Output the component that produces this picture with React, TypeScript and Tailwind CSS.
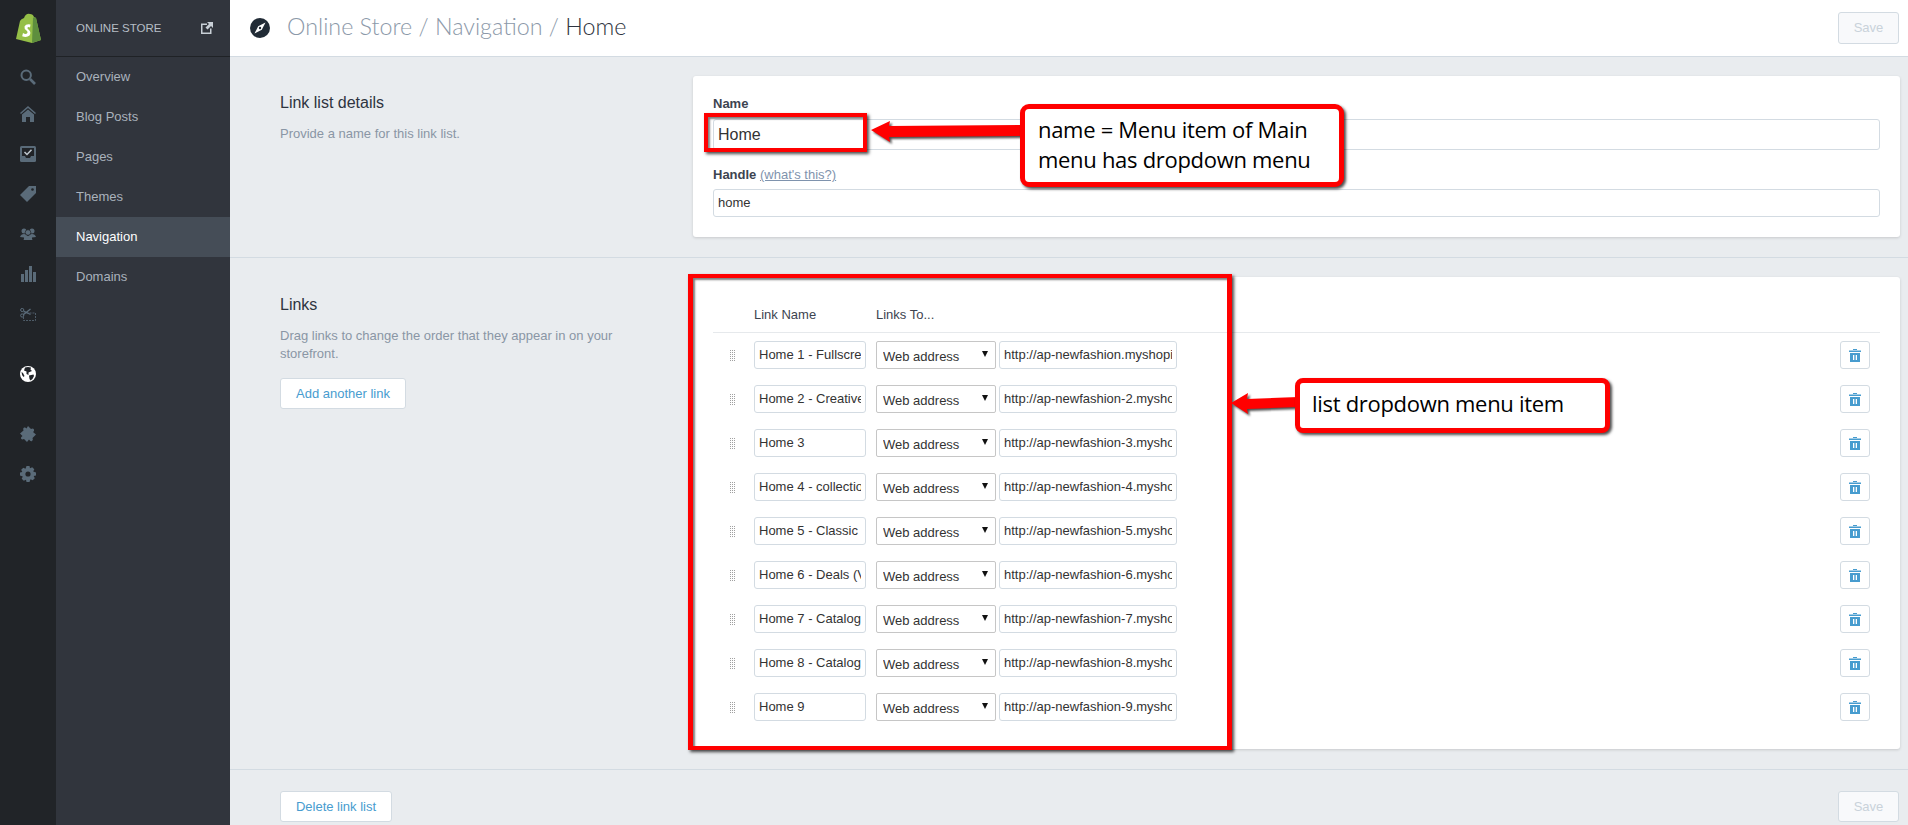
import React from 'react';

const ICON = '#5a6b79';

const links = [
    { name: 'Home 1 - Fullscreen', url: 'http://ap-newfashion.myshopify.com' },
    { name: 'Home 2 - Creative', url: 'http://ap-newfashion-2.myshopify.com' },
    { name: 'Home 3', url: 'http://ap-newfashion-3.myshopify.com' },
    { name: 'Home 4 - collection', url: 'http://ap-newfashion-4.myshopify.com' },
    { name: 'Home 5 - Classic', url: 'http://ap-newfashion-5.myshopify.com' },
    { name: 'Home 6 - Deals (V', url: 'http://ap-newfashion-6.myshopify.com' },
    { name: 'Home 7 - Catalog', url: 'http://ap-newfashion-7.myshopify.com' },
    { name: 'Home 8 - Catalog', url: 'http://ap-newfashion-8.myshopify.com' },
    { name: 'Home 9', url: 'http://ap-newfashion-9.myshopify.com' },
];

const navItems = ['Overview', 'Blog Posts', 'Pages', 'Themes', 'Navigation', 'Domains'];

const Logo = () => (
    <svg width="27" height="31" viewBox="0 0 27 31">
        <path d="M1 26 L5 8 Q6 6 9 5 Q11 0 15 1 Q18 1 19 4 L21 5 L26 27 L17 30 Z" fill="#95bf47" />
        <path d="M19 4 L21 5 L26 27 L17 30 L18 5 Z" fill="#5e8e3e" />
        <path d="M15.5 11.5 Q11 10.5 9.5 13.5 Q9 16 11.5 17.5 Q13.5 19 12 20.5 Q10.5 21.5 8 20 L7.2 23.2 Q11.5 25 14.5 22.5 Q16.5 19.5 14 17 Q12 15.500 12.500 14.500 Q13.500 13.500 15 14.500 Z" fill="#fff" />
    </svg>
);

const SearchIcon = () => (
    <svg width="16" height="16" viewBox="0 0 16 16" fill="none" stroke={ICON}>
        <circle cx="6.200" cy="6.200" r="4.700" strokeWidth="2" />
        <path d="M10 10 L15 15" strokeWidth="2.600" />
    </svg>
);

const HomeIcon = () => (
    <svg width="16" height="16" viewBox="0 0 16 16" fill={ICON}>
        <path d="M8 0 L16 7 L15 8 L8 2 L1 8 L0 7 Z" />
        <path d="M8 3.500 L14 8.500 V16 H10 V11 H6 V16 H2 V8.500 Z" />
    </svg>
);

const CheckIcon = () => (
    <svg width="16" height="16" viewBox="0 0 16 16">
        <rect width="16" height="16" rx="1.500" fill={ICON} />
        <path d="M2 2 H14 V10 H11 L10 12 H6 L5 10 H2 Z" fill="#212428" />
        <path d="M4.500 6 L7 8.500 L11.500 3.800" stroke="#c0c8cf" strokeWidth="1.500" fill="none" />
    </svg>
);

const TagIcon = () => (
    <svg width="16" height="16" viewBox="0 0 16 16">
        <path d="M9 0 H16 V7 L7 16 L0 9 Z" fill={ICON} />
        <circle cx="12.500" cy="3.500" r="1.300" fill="#212428" />
    </svg>
);

const PeopleIcon = () => (
    <svg width="16" height="12" viewBox="0 0 16 12" fill={ICON}>
        <circle cx="4" cy="3" r="2.500" />
        <circle cx="12" cy="3" r="2.500" />
        <path d="M0 9 Q1 6 4 6 Q7 6 8 9 Q9 6 12 6 Q15 6 16 9 L12 9.500 V11 H4 V9.500 Z" />
        <circle cx="8" cy="4.500" r="2.800" stroke="#212428" strokeWidth="0.700" />
        <path d="M3.500 12 Q4.500 8 8 8 Q11.500 8 12.500 12 Z" />
    </svg>
);

const ChartIcon = () => (
    <svg width="15" height="16" viewBox="0 0 15 16" fill={ICON}>
        <rect y="8" width="3" height="8" />
        <rect x="4" y="4" width="3" height="12" />
        <rect x="8" y="0" width="3" height="16" />
        <rect x="12" y="6" width="3" height="10" />
    </svg>
);

const ScissorsIcon = () => (
    <svg width="16" height="13" viewBox="0 0 16 13" fill="none" stroke={ICON}>
        <circle cx="2.200" cy="2" r="1.600" />
        <circle cx="2.200" cy="7.500" r="1.600" />
        <path d="M3.600 3 L10.500 6.500 M3.600 6.500 L10.500 1" strokeWidth="1.300" />
        <rect x="3.500" y="5" width="12" height="7.500" strokeWidth="0.800" strokeDasharray="2 1" />
    </svg>
);

const GlobeIcon = () => (
    <svg width="16" height="16" viewBox="0 0 16 16">
        <circle cx="8" cy="8" r="8" fill="#fff" />
        <path d="M5 1.500 Q8 0.500 11 1.500 L10.500 3.500 L12 5 L8.500 6.500 L8.500 9 L6.500 8 L6.500 5.500 L4 4.500 Z" fill="#212428" />
        <path d="M9 9.500 L13.500 8.500 L14 10 Q13 13 10.500 14.500 L9.500 13 Z" fill="#212428" />
        <path d="M1.500 6 L3 7 L4.500 10 L3.500 11 Q1.500 9 1.500 6 Z" fill="#212428" />
    </svg>
);

const PuzzleIcon = () => (
    <svg width="16" height="16" viewBox="0 0 16 16" fill={ICON}>
        <path d="M8 0 L11 3 Q13 2 14 3.500 Q14.500 5 13 6 L16 8.500 L12.500 12 Q13.500 14 12 15 Q10.500 16 9 13.500 L7 16 L4 13 Q2 14 1 12.500 Q0.500 11 2.500 10 L0 7.500 L3.500 4.500 Q2.500 2.500 4 1.500 Q5.500 1 6.500 2.500 Z" />
    </svg>
);

const GearIcon = () => (
    <svg width="16" height="16" viewBox="0 0 16 16">
        <path d="M6.500 0 H9.500 L10 2.300 L12.200 1.200 L14.300 3.300 L13.200 5.500 L16 6.500 V9.500 L13.700 10 L14.800 12.200 L12.700 14.300 L10.500 13.200 L9.500 16 H6.500 L6 13.700 L3.800 14.800 L1.700 12.700 L2.800 10.500 L0 9.500 V6.500 L2.300 6 L1.200 3.800 L3.300 1.700 L5.500 2.800 Z" fill={ICON} />
        <circle cx="8" cy="8" r="2.600" fill="#212428" />
    </svg>
);

const ExternalIcon = () => (
    <svg width="12" height="12" viewBox="0 0 12 12">
        <path d="M0 1.500 H6 V3 H1.500 V10.500 H9 V6.500 H10.500 V12 H0 Z" fill="#c8cfd6" />
        <path d="M6 0 H12 V6 L10 4 L6.500 7.500 L4.500 5.500 L8 2 Z" fill="#c8cfd6" />
    </svg>
);

const CompassIcon = () => (
    <svg width="20" height="20" viewBox="0 0 20 20">
        <circle cx="10" cy="10" r="10" fill="#212b36" />
        <path d="M15.500 4.500 L11.800 11.800 L4.500 15.500 L8.200 8.200 Z" fill="#fff" />
        <circle cx="10" cy="10" r="1.200" fill="#212b36" />
    </svg>
);

const TrashIcon = () => (
    <svg width="12" height="13" viewBox="0 0 12 13" fill="#479ccf">
        <rect x="4" y="0" width="4" height="1" />
        <rect x="0" y="1.500" width="12" height="1.500" />
        <path d="M1 4 H11 V13 H1 Z M4 6 V11 H5.300 V6 Z M6.700 6 V11 H8 V6 Z" fillRule="evenodd" />
    </svg>
);

const DragHandle = () => (
    <div className="grid grid-cols-3 gap-px w-[5px]">
        {Array.from({ length: 18 }).map((_, i) => (
            <span key={i} className="w-[1px] h-[1px] bg-[#a0a0a0]" />
        ))}
    </div>
);

const railIcons = [
    { icon: <SearchIcon />, cls: 'h-[34px]' },
    { icon: <HomeIcon />, cls: 'h-10' },
    { icon: <CheckIcon />, cls: 'h-10' },
    { icon: <TagIcon />, cls: 'h-10' },
    { icon: <PeopleIcon />, cls: 'h-10' },
    { icon: <ChartIcon />, cls: 'h-10' },
    { icon: <ScissorsIcon />, cls: 'h-10 mb-5' },
    { icon: <GlobeIcon />, cls: 'h-10 mb-5' },
    { icon: <PuzzleIcon />, cls: 'h-10' },
    { icon: <GearIcon />, cls: 'h-10' },
];

const LinkRow = ({ name, url }: { name: string; url: string }) => (
    <div className="flex items-center h-7 mb-4">
        <div className="w-[41px] pl-[17px] flex">
            <DragHandle />
        </div>
        <input readOnly value={name} className="w-[112px] h-7 px-1 pb-[2px] border border-[#d3dbe2] rounded-[3px] bg-white text-[13px] text-[#333] outline-none" />
        <div className="relative w-[120px] h-7 ml-[10px]">
            <select className="appearance-none w-full h-7 pl-[6px] pt-[3px] border border-[#c6c6c6] rounded-[2px] bg-white text-[13px] text-[#333] outline-none">
                <option>Web address</option>
            </select>
            <span className="absolute right-[8px] top-[10px] w-0 h-0 border-x-[3px] border-x-transparent border-t-[6px] border-t-[#111]" />
        </div>
        <input readOnly value={url} className="w-[178px] h-7 ml-[3px] px-1 pb-[2px] border border-[#d3dbe2] rounded-[3px] bg-white text-[13px] text-[#333] outline-none" />
        <button className="ml-auto w-[30px] h-7 flex items-center justify-center border border-[#d3dbe2] rounded-[3px] bg-white">
            <TrashIcon />
        </button>
    </div>
);

const Annotations = () => (
    <>
        {/* Red box round the name field */}
        <div className="absolute left-[704px] top-[113px] w-[163px] h-[39px] border-4 border-[#ff0000] shadow-[2px_2px_3px_rgba(0,0,0,0.7),inset_2px_2px_2px_rgba(0,0,0,0.5)]" />
        <svg className="absolute left-[868px] top-[118px] drop-shadow-[2px_2px_1px_rgba(0,0,0,0.7)]" width="156" height="28" viewBox="0 0 156 28">
            <path d="M3 12 L22 3 L21 8 L156 7 V18 L21 19 L22 24 Z" fill="#ff0000" />
        </svg>
        <div className="absolute left-[1020px] top-[104px] w-[324px] h-[83px] pl-[13px] flex items-center border-[5px] border-[#ff0000] rounded-[9px] bg-white shadow-[2px_2px_3px_rgba(0,0,0,0.7)] font-['Open_Sans',sans-serif] text-[22px] leading-[30px] tracking-[-0.3px] text-black">
            <p className="mt-[-3px]">name = Menu item of Main<br />menu has dropdown menu</p>
        </div>

        {/* Red box round the links table */}
        <div className="absolute left-[688px] top-[274px] w-[544px] h-[476px] border-x-[5px] border-y-4 border-[#ff0000] shadow-[2px_2px_3px_rgba(0,0,0,0.7),inset_2px_2px_2px_rgba(0,0,0,0.5)]" />
        <svg className="absolute left-[1229px] top-[390px] drop-shadow-[2px_2px_1px_rgba(0,0,0,0.7)]" width="70" height="28" viewBox="0 0 70 28">
            <path d="M2 13 L19 3 L18 9 L70 7 V17 L18 19 L19 24 Z" fill="#ff0000" />
        </svg>
        <div className="absolute left-[1295px] top-[378px] w-[315px] h-[55px] pl-[12px] flex items-center border-[5px] border-[#ff0000] rounded-[8px] bg-white shadow-[2px_2px_3px_rgba(0,0,0,0.7)] font-['Open_Sans',sans-serif] text-[22px] tracking-[-0.3px] text-black">
            <p className="mt-[-5px]">list dropdown menu item</p>
        </div>
    </>
);

export default function App() {
    return (
        <div className="relative flex h-[825px] w-[1908px] overflow-hidden bg-[#e9ecef] font-['Liberation_Sans',sans-serif]">
            {/* Icon rail */}
            <div className="w-14 shrink-0 bg-[#212428] flex flex-col items-center">
                <div className="h-[60px] w-full flex items-start justify-center pt-[13px]">
                    <Logo />
                </div>
                {railIcons.map((item, i) => (
                    <div key={i} className={`${item.cls} flex items-center justify-center`}>
                        {item.icon}
                    </div>
                ))}
            </div>

            {/* Section nav */}
            <div className="w-[174px] shrink-0 bg-[#31353d]">
                <div className="h-[57px] pl-5 pr-[17px] flex items-center justify-between border-b border-[#1f2226]">
                    <span className="mt-px text-[11.5px] text-[#b6bec6] uppercase">Online Store</span>
                    <ExternalIcon />
                </div>
                {navItems.map(item => (
                    <div
                        key={item}
                        className={item === 'Navigation'
                            ? 'h-10 pl-5 flex items-center bg-[#454d57] text-[13px] text-white'
                            : 'h-10 pl-5 flex items-center text-[13px] text-[#a9b2bc]'}
                    >
                        {item}
                    </div>
                ))}
            </div>

            {/* Main */}
            <div className="flex-1 min-w-0">
                <div className="h-[57px] bg-white border-b border-[#d3dbe2] flex items-center pl-5 pr-[9px]">
                    <CompassIcon />
                    <h1 className="ml-[17px] mb-[3px] font-['Lato',sans-serif] font-light text-[23.3px] text-[#8c99a9]">
                        Online Store / Navigation / <span className="text-[#2e3440]">Home</span>
                    </h1>
                    <button className="ml-auto w-[61px] h-8 border border-[#d3dbe2] rounded-[3px] bg-[#f8f9fb] text-[13px] text-[#c9d2da]">Save</button>
                </div>

                <div className="flex pl-[50px] pr-2 pt-[19px] pb-5 border-b border-[#d3dbe2]">
                    <div className="w-[413px] shrink-0 pt-[17px]">
                        <h2 className="text-base leading-5 text-[#2e3440]">Link list details</h2>
                        <p className="mt-3 text-[13px] leading-[18px] text-[#8a96a5]">Provide a name for this link list.</p>
                    </div>
                    <div className="flex-1 h-[161px] pl-5 pr-5 pt-5 bg-white rounded-[3px] shadow-[0_1px_3px_rgba(0,0,0,0.15)]">
                        <label className="block h-4 text-[13px] leading-4 font-bold text-[#3d4450]">Name</label>
                        <input readOnly value="Home" className="block w-full h-[31px] mt-[7px] px-1 border border-[#d3dbe2] rounded-[3px] text-base text-[#333] outline-none" />
                        <label className="block h-4 mt-[17px] text-[13px] leading-4 font-bold text-[#3d4450]">
                            Handle <span className="font-normal text-[#7f93ad] underline">(what's this?)</span>
                        </label>
                        <input readOnly value="home" className="block w-full h-7 mt-[6px] px-1 pb-[2px] border border-[#d3dbe2] rounded-[3px] text-[13px] text-[#333] outline-none" />
                    </div>
                </div>

                <div className="flex pl-[50px] pr-2 pt-[19px] pb-5 border-b border-[#d3dbe2]">
                    <div className="w-[413px] shrink-0 pt-[18px]">
                        <h2 className="text-base leading-5 text-[#2e3440]">Links</h2>
                        <p className="w-[360px] mt-3 text-[13px] leading-[18px] text-[#8a96a5]">Drag links to change the order that they appear in on your storefront.</p>
                        <button className="block w-[126px] h-[31px] mt-[15px] border border-[#d3dbe2] rounded-[3px] bg-white text-[13px] text-[#479ccf]">Add another link</button>
                    </div>
                    <div className="flex-1 h-[472px] pl-5 pr-[30px] bg-white rounded-[3px] shadow-[0_1px_3px_rgba(0,0,0,0.15)]">
                        <div className="h-[56px] pl-[41px] pt-[29px] mr-[-10px] flex items-start border-b border-[#e6e9ec] text-[13px] leading-[18px] text-[#3d4450]">
                            <span className="w-[122px]">Link Name</span>
                            <span>Links To...</span>
                        </div>
                        <div className="pt-2">
                            {links.map(link => (
                                <LinkRow key={link.name + link.url} name={link.name} url={link.url} />
                            ))}
                        </div>
                    </div>
                </div>

                <div className="flex items-center justify-between pl-[50px] pr-[9px] pt-[21px]">
                    <button className="w-[112px] h-[31px] border border-[#d3dbe2] rounded-[3px] bg-white text-[13px] text-[#479ccf]">Delete link list</button>
                    <button className="w-[61px] h-[31px] border border-[#d3dbe2] rounded-[3px] bg-[#f8f9fb] text-[13px] text-[#c9d2da]">Save</button>
                </div>
            </div>

            <Annotations />
        </div>
    );
}
